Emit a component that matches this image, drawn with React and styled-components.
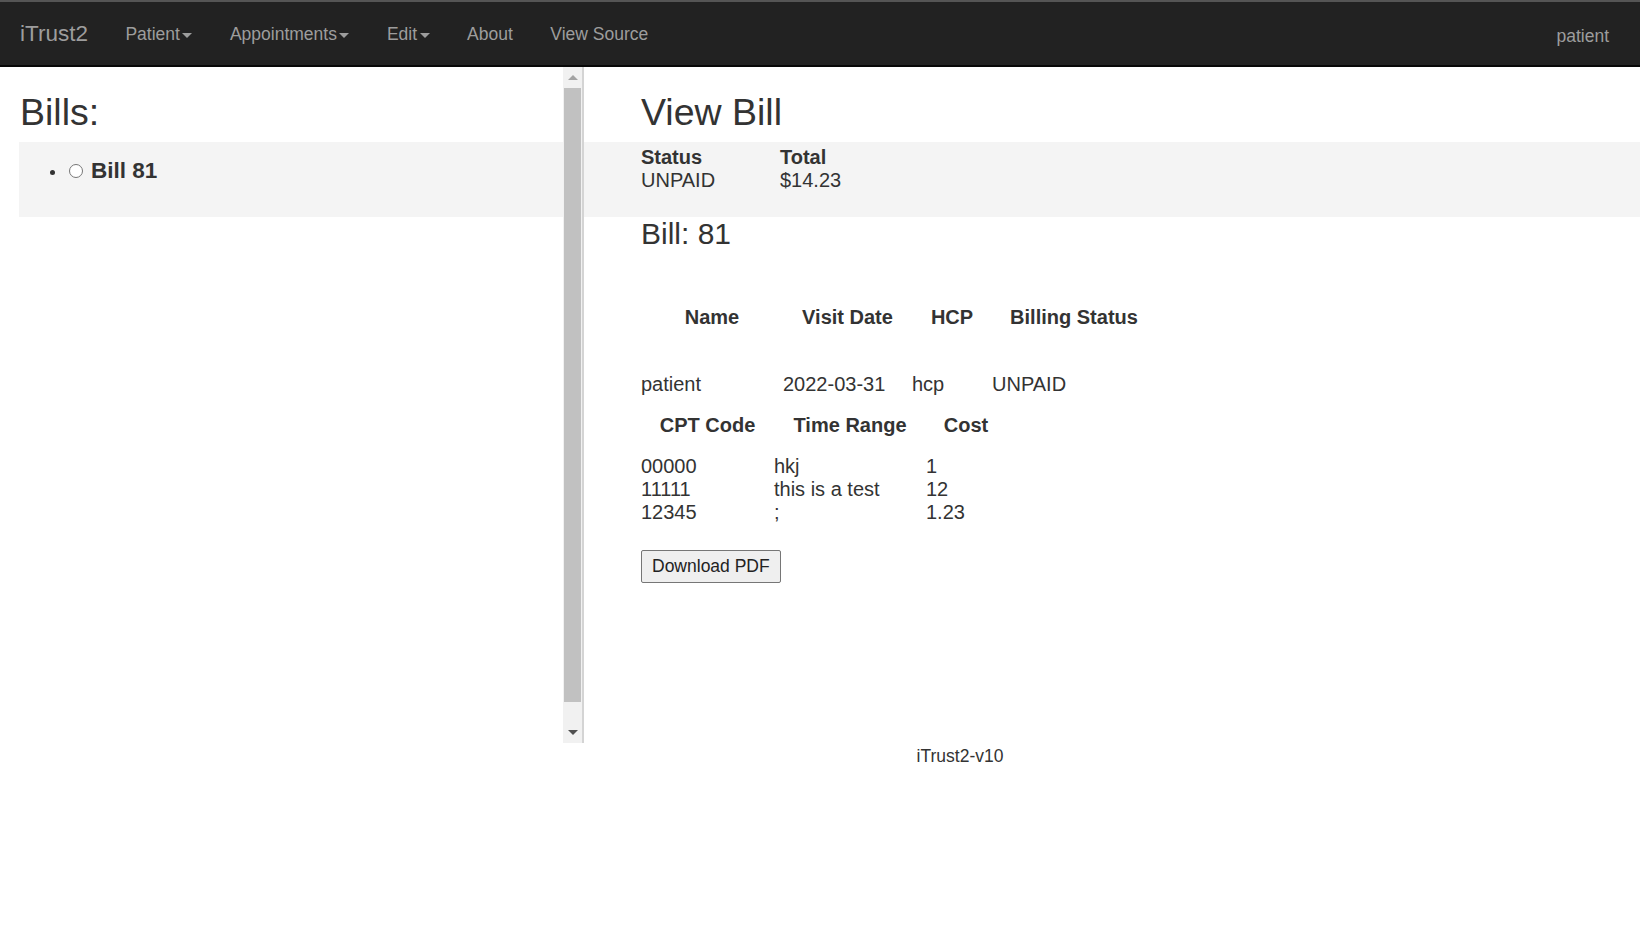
import React from "react";
import styled, { createGlobalStyle } from "styled-components";

const GlobalStyle = createGlobalStyle`
  html, body {
    margin: 0;
    padding: 0;
    background: #fff;
  }
  body {
    font-family: "Liberation Sans", Arial, sans-serif;
    color: #333;
    font-size: 20px;
    line-height: 23px;
  }
  * {
    box-sizing: border-box;
  }
`;

const Navbar = styled.nav`
  display: flex;
  align-items: center;
  height: 67px;
  background: #222;
  border-top: 2px solid #555;
  border-bottom: 2px solid #080808;
  padding: 2px 31px 0 20px;
`;

const Brand = styled.a`
  font-size: 22.5px;
  line-height: 1;
  color: #9d9d9d;
  padding-right: 18.75px;
`;

const NavLinks = styled.ul`
  display: flex;
  flex: 1;
  list-style: none;
  margin: 0;
  padding: 0;
`;

const NavItem = styled.li`
  display: flex;
  align-items: center;
  padding: 0 18.75px;
  font-size: 17.5px;
  color: #9d9d9d;
`;

const Caret = styled.span`
  display: inline-block;
  width: 0;
  height: 0;
  margin-left: 2.5px;
  margin-top: 2px;
  border-top: 5px solid #9d9d9d;
  border-left: 5px solid transparent;
  border-right: 5px solid transparent;
`;

const NavUser = styled.span`
  font-size: 17.5px;
  color: #9d9d9d;
  padding-top: 4px;
`;

const Main = styled.div`
  display: flex;
`;

const LeftPanel = styled.aside`
  display: flex;
  width: 584px;
  height: 676px;
  flex-shrink: 0;
`;

const LeftContent = styled.div`
  flex: 1;
  padding-left: 19px;
`;

const Heading = styled.h2`
  margin: 25px 0 9px;
  font-size: 37.5px;
  line-height: 41.25px;
  font-weight: normal;
  padding-left: ${(p) => p.$indent || 0}px;
`;

const Well = styled.div`
  background: #f4f4f4;
  height: 74.5px;
`;

const BillList = styled.ul`
  list-style: none;
  margin: 0;
  padding: 17px 0 0 31px;
`;

const BillItem = styled.li`
  display: flex;
  align-items: center;
  font-size: 22.5px;
  line-height: 23px;
  font-weight: bold;
`;

const Bullet = styled.span`
  width: 5px;
  height: 5px;
  border-radius: 50%;
  background: #333;
  margin: 4px 14px 0 0;
`;

const Radio = styled.span`
  width: 14px;
  height: 14px;
  border-radius: 50%;
  border: 1px solid #767676;
  background: #fff;
  margin: 0 8px 0 0;
`;

const Scrollbar = styled.div`
  display: flex;
  flex-direction: column;
  align-items: center;
  width: 21px;
  background: #f1f1f1;
  border-right: 2px solid #d4d4d4;
  padding: 0 1px;
`;

const ArrowBox = styled.div`
  display: flex;
  align-items: center;
  justify-content: center;
  height: 21px;
  width: 100%;
`;

const Arrow = styled.span`
  width: 0;
  height: 0;
  border-left: 5px solid transparent;
  border-right: 5px solid transparent;
  ${(p) =>
    p.$up
      ? `border-bottom: 5px solid #a3a3a3;`
      : `border-top: 5px solid #505050;`}
`;

const Thumb = styled.div`
  height: ${(p) => p.$size}px;
  width: 17px;
  background: #c1c1c1;
`;

const TrackRest = styled.div`
  flex: 1;
`;

const RightColumn = styled.section`
  flex: 1;
  padding-left: 57px;
`;

const StatusWell = styled(Well)`
  margin-left: -57px;
  padding: 3.5px 0 0 57px;
  display: grid;
  grid-template-columns: 139px auto;
  align-content: start;
`;

const Label = styled.div`
  font-weight: bold;
`;

const SubHeading = styled.h3`
  margin: 0;
  font-size: 30px;
  line-height: 33px;
  font-weight: normal;
`;

const Row = styled.div`
  display: grid;
  grid-template-columns: ${(p) => p.$cols};
  margin-top: ${(p) => p.$top || 0}px;
`;

const Th = styled.div`
  font-weight: bold;
  text-align: center;
`;

const Td = styled.div`
  white-space: nowrap;
`;

const Button = styled.button`
  margin-top: 26px;
  height: 32.5px;
  padding: 0 10px;
  font-family: "Liberation Sans", Arial, sans-serif;
  font-size: 17.5px;
  color: #222;
  background: #efefef;
  border: 1px solid #767676;
  border-radius: 2px;
`;

const Footer = styled.footer`
  text-align: center;
  padding: 3px 0 0 280px;
  font-size: 17.5px;
  line-height: 20px;
`;

const visitCols = "142px 129px 80px 164px";
const lineCols = "133px 152px 80px";

const lines = [
  ["00000", "hkj", "1"],
  ["11111", "this is a test", "12"],
  ["12345", ";", "1.23"],
];

export default function App() {
  return (
    <>
      <GlobalStyle />
      <Navbar>
        <Brand>iTrust2</Brand>
        <NavLinks>
          <NavItem>Patient<Caret /></NavItem>
          <NavItem>Appointments<Caret /></NavItem>
          <NavItem>Edit<Caret /></NavItem>
          <NavItem>About</NavItem>
          <NavItem>View Source</NavItem>
        </NavLinks>
        <NavUser>patient</NavUser>
      </Navbar>

      <Main>
        <LeftPanel>
          <LeftContent>
            <Heading $indent={1}>Bills:</Heading>
            <Well>
              <BillList>
                <BillItem>
                  <Bullet />
                  <Radio />
                  Bill 81
                </BillItem>
              </BillList>
            </Well>
          </LeftContent>
          <Scrollbar>
            <ArrowBox><Arrow $up /></ArrowBox>
            <Thumb $size={614} />
            <TrackRest />
            <ArrowBox><Arrow /></ArrowBox>
          </Scrollbar>
        </LeftPanel>

        <RightColumn>
          <Heading>View Bill</Heading>
          <StatusWell>
            <Label>Status</Label>
            <Label>Total</Label>
            <div>UNPAID</div>
            <div>$14.23</div>
          </StatusWell>
          <SubHeading>Bill: 81</SubHeading>

          <Row $cols={visitCols} $top={56}>
            <Th>Name</Th>
            <Th>Visit Date</Th>
            <Th>HCP</Th>
            <Th>Billing Status</Th>
          </Row>
          <Row $cols={visitCols} $top={44}>
            <Td>patient</Td>
            <Td>2022-03-31</Td>
            <Td>hcp</Td>
            <Td>UNPAID</Td>
          </Row>

          <Row $cols={lineCols} $top={18.7}>
            <Th>CPT Code</Th>
            <Th>Time Range</Th>
            <Th>Cost</Th>
          </Row>
          <Row $cols={lineCols} $top={17.8}>
            {lines.map((l) => (
              <React.Fragment key={l[0]}>
                <Td>{l[0]}</Td>
                <Td>{l[1]}</Td>
                <Td>{l[2]}</Td>
              </React.Fragment>
            ))}
          </Row>

          <Button>Download PDF</Button>
        </RightColumn>
      </Main>

      <Footer>iTrust2-v10</Footer>
    </>
  );
}
